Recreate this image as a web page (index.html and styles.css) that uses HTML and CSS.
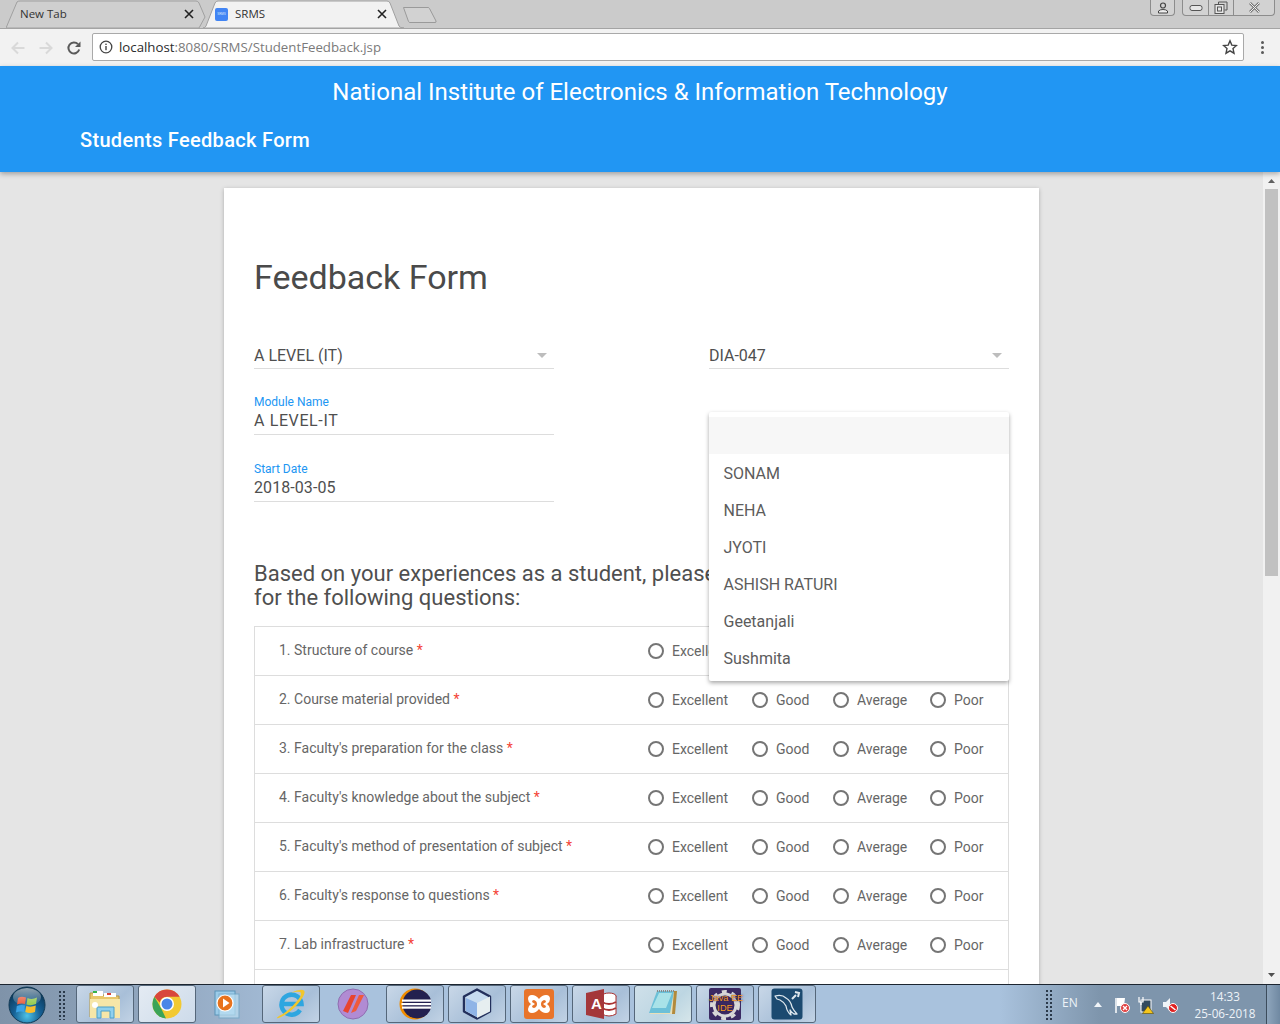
FILE: index.html
```html
<!DOCTYPE html>
<html lang="en">
<head>
<meta charset="utf-8">
<title>SRMS</title>
<link rel="stylesheet" href="styles.css">
</head>
<body>
<div class="screen">
  <header class="browser">
    <div class="tabstrip">
      <div class="tab tab-inactive">
        <svg class="tab-shape" width="200" height="28" viewBox="0 0 200 28"><path d="M0 28 L11 2 Q12 1 14 1 L190 1 Q192 1 193 3 L199 17 L193 28 Z" fill="#cfcfcf" stroke="#a0a0a0"/></svg>
        <span class="tab-title">New Tab</span>
        <svg class="tab-close" width="10" height="10" viewBox="0 0 10 10"><path d="M1 1 L9 9 M9 1 L1 9" stroke="#222" stroke-width="1.6"/></svg>
      </div>
      <div class="tab tab-active">
        <svg class="tab-shape" width="202" height="28" viewBox="0 0 202 28"><path d="M0 28 Q2 28 3 26 L12 3 Q13 1 15 1 L184 1 Q186 1 187 3 L196 26 Q197 28 201 28 Z" fill="#f2f2f2" stroke="#a0a0a0"/></svg>
        <span class="favicon">SRMS</span>
        <span class="tab-title">SRMS</span>
        <svg class="tab-close" width="10" height="10" viewBox="0 0 10 10"><path d="M1 1 L9 9 M9 1 L1 9" stroke="#222" stroke-width="1.6"/></svg>
      </div>
      <svg class="newtab" width="36" height="18" viewBox="0 0 36 18"><path d="M1.5 1.5 L26 1.5 Q27 1.500 27.500 2.500 L34 15 Q34.500 16.500 33 16.500 L8 16.500 Q7 16.500 6.500 15.500 Z" fill="#d2d2d2" stroke="#9a9a9a"/></svg>
      <div class="winctl">
        <div class="wc-group wc-user">
          <svg width="14" height="12" viewBox="0 0 14 12"><circle cx="7" cy="3.500" r="2.500" fill="none" stroke="#444" stroke-width="1.200"/><path d="M2.500 11 L2.500 9 Q4 7.500 7 7.500 Q10 7.500 11.500 9 L11.500 11 Z" fill="#eee" stroke="#444"/></svg>
        </div>
        <div class="wc-group">
          <div class="wc-btn wc-min"><svg width="14" height="8" viewBox="0 0 14 8"><rect x="1" y="1.500" width="12" height="5" rx="2" fill="#e6e6e6" stroke="#555"/></svg></div>
          <div class="wc-btn wc-max"><svg width="14" height="13" viewBox="0 0 14 13"><path d="M4.500 3 V1 H13 V9 H10.500" fill="none" stroke="#555"/><rect x="1" y="3.500" width="9" height="9" fill="#e6e6e6" stroke="#555"/><rect x="3.500" y="6" width="4" height="4" fill="none" stroke="#555"/></svg></div>
          <div class="wc-btn wc-close"><svg width="13" height="11" viewBox="0 0 13 11"><path d="M2 1 L11 10 M11 1 L2 10" stroke="#777" stroke-width="2.600"/><path d="M2 1 L11 10 M11 1 L2 10" stroke="#eee" stroke-width="1"/></svg></div>
        </div>
      </div>
    </div>
    <div class="toolbar">
      <div class="navs">
        <svg width="16" height="16" viewBox="0 0 16 16"><path d="M14.500 8 H2.500 M8 2.500 L2.500 8 L8 13.500" fill="none" stroke="#d9d9d9" stroke-width="2"/></svg>
        <svg width="16" height="16" viewBox="0 0 16 16"><path d="M1.500 8 H13.500 M8 2.500 L13.500 8 L8 13.500" fill="none" stroke="#d9d9d9" stroke-width="2"/></svg>
        <svg width="16" height="16" viewBox="0 0 16 16"><path d="M13.200 9.500 A5.500 5.500 0 1 1 12 4.200" fill="none" stroke="#5a5a5a" stroke-width="2"/><path d="M14.500 1.500 V7 H9 Z" fill="#5a5a5a"/></svg>
      </div>
      <div class="urlbox">
        <svg width="14" height="14" viewBox="0 0 14 14"><circle cx="7" cy="7" r="5.800" fill="none" stroke="#444" stroke-width="1.300"/><rect x="6.300" y="6" width="1.400" height="4.200" fill="#444"/><rect x="6.300" y="3.600" width="1.400" height="1.400" fill="#444"/></svg>
        <span class="url"><span class="url-host">localhost</span>:8080/SRMS/StudentFeedback.jsp</span>
        <svg class="star" width="16" height="16" viewBox="0 0 16 16"><path d="M8 1.800 L9.800 6.100 L14.500 6.500 L11 9.600 L12 14.200 L8 11.800 L4 14.200 L5 9.600 L1.500 6.500 L6.200 6.100 Z" fill="none" stroke="#444" stroke-width="1.400"/></svg>
      </div>
      <div class="kebab"><i></i><i></i><i></i></div>
    </div>
  </header>

  <div class="appbar">
    <h1 class="org">National Institute of Electronics &amp; Information Technology</h1>
    <h2 class="formname">Students Feedback Form</h2>
  </div>

  <div class="viewport">
    <main class="scroller">
      <section class="card">
        <h2 class="card-title">Feedback Form</h2>
        <div class="fields">
          <div class="field select"><span class="value">A LEVEL (IT)</span><i class="caret"></i></div>
          <div class="field select"><span class="value">DIA-047</span><i class="caret"></i></div>
          <div class="field labeled"><label class="flabel">Module Name</label><span class="value value-wide">A LEVEL-IT</span></div>
          <div class="field-blank"></div>
          <div class="field labeled"><label class="flabel">Start Date</label><span class="value">2018-03-05</span></div>
        </div>
        <p class="prompt">Based on your experiences as a student, please select a rating<br>for the following questions:</p>
        <div class="questions">
          <div class="row"><div class="q">1. Structure of course <b>*</b></div><div class="opts"><span class="opt"><i class="radio"></i>Excellent</span><span class="opt"><i class="radio"></i>Good</span><span class="opt"><i class="radio"></i>Average</span><span class="opt"><i class="radio"></i>Poor</span></div></div>
          <div class="row"><div class="q">2. Course material provided <b>*</b></div><div class="opts"><span class="opt"><i class="radio"></i>Excellent</span><span class="opt"><i class="radio"></i>Good</span><span class="opt"><i class="radio"></i>Average</span><span class="opt"><i class="radio"></i>Poor</span></div></div>
          <div class="row"><div class="q">3. Faculty's preparation for the class <b>*</b></div><div class="opts"><span class="opt"><i class="radio"></i>Excellent</span><span class="opt"><i class="radio"></i>Good</span><span class="opt"><i class="radio"></i>Average</span><span class="opt"><i class="radio"></i>Poor</span></div></div>
          <div class="row"><div class="q">4. Faculty's knowledge about the subject <b>*</b></div><div class="opts"><span class="opt"><i class="radio"></i>Excellent</span><span class="opt"><i class="radio"></i>Good</span><span class="opt"><i class="radio"></i>Average</span><span class="opt"><i class="radio"></i>Poor</span></div></div>
          <div class="row"><div class="q">5. Faculty's method of presentation of subject <b>*</b></div><div class="opts"><span class="opt"><i class="radio"></i>Excellent</span><span class="opt"><i class="radio"></i>Good</span><span class="opt"><i class="radio"></i>Average</span><span class="opt"><i class="radio"></i>Poor</span></div></div>
          <div class="row"><div class="q">6. Faculty's response to questions <b>*</b></div><div class="opts"><span class="opt"><i class="radio"></i>Excellent</span><span class="opt"><i class="radio"></i>Good</span><span class="opt"><i class="radio"></i>Average</span><span class="opt"><i class="radio"></i>Poor</span></div></div>
          <div class="row"><div class="q">7. Lab infrastructure <b>*</b></div><div class="opts"><span class="opt"><i class="radio"></i>Excellent</span><span class="opt"><i class="radio"></i>Good</span><span class="opt"><i class="radio"></i>Average</span><span class="opt"><i class="radio"></i>Poor</span></div></div>
          <div class="row"></div>
        </div>
        <ul class="menu">
          <li class="menu-blank"></li>
          <li>SONAM</li>
          <li>NEHA</li>
          <li>JYOTI</li>
          <li>ASHISH RATURI</li>
          <li>Geetanjali</li>
          <li>Sushmita</li>
        </ul>
      </section>
    </main>
    <aside class="scrollbar">
      <svg width="17" height="17" viewBox="0 0 17 17"><path d="M5 11 L8.500 7 L12 11 Z" fill="#606060"/></svg>
      <div class="thumb"></div>
      <div class="track"></div>
      <svg width="17" height="17" viewBox="0 0 17 17"><path d="M5 6 L8.500 10 L12 6 Z" fill="#505050"/></svg>
    </aside>
  </div>

  <footer class="taskbar">
    <svg class="orb" width="38" height="38" viewBox="0 0 38 38">
      <defs>
        <radialGradient id="orbfill" cx=".5" cy=".8" r=".75"><stop offset="0" stop-color="#4ec3e8"/><stop offset=".5" stop-color="#155f94"/><stop offset="1" stop-color="#0b3554"/></radialGradient>
        <linearGradient id="orbshine" x1="0" y1="0" x2="0" y2="1"><stop offset="0" stop-color="#fff" stop-opacity=".55"/><stop offset="1" stop-color="#fff" stop-opacity=".05"/></linearGradient>
      </defs>
      <circle cx="19" cy="19" r="18" fill="url(#orbfill)" stroke="#123a55"/>
      <path d="M10 12 Q13 10 18 11.500 L17 18 Q13 17 9 18.500 Z" fill="#e8522f"/>
      <path d="M19.500 12 Q24 14 29 11.500 L28 18 Q23 20 18.500 18.500 Z" fill="#8cc63f"/>
      <path d="M8.800 20 Q13 18.500 17 19.500 L16 26 Q12 25 8 26.500 Z" fill="#3ba3e6"/>
      <path d="M18.300 20 Q23 21.500 27.800 19.500 L27 26 Q22 28 17.300 26 Z" fill="#f9bc2c"/>
      <ellipse cx="19" cy="11" rx="14" ry="9" fill="url(#orbshine)"/>
    </svg>
    <div class="grip"></div>
    <div class="apps">
      <div class="app"><svg width="36" height="34" viewBox="0 0 36 34"><path d="M3 6 H15 L17 9 H32 V30 H3 Z" fill="#e8c76a" stroke="#b99a44"/><rect x="6" y="4" width="10" height="5" fill="#fff"/><rect x="6" y="4" width="4" height="2" fill="#37b34a"/><rect x="17" y="6" width="12" height="4" fill="#fff"/><rect x="20" y="6" width="4" height="2" fill="#d8433a"/><path d="M3 12 H33 V31 H3 Z" fill="#f6e6a8"/><path d="M10 31 V20 H27 V31 H23 V24 H14 V31 Z" fill="#8fd0ee" stroke="#4b9fca"/><circle cx="8" cy="18" r="3" fill="#fff"/></svg></div>
      <div class="app app-light"><svg width="30" height="30" viewBox="0 0 30 30"><circle cx="15" cy="15" r="14.500" fill="#f2c931"/><path d="M2.400 7.800 A14.500 14.500 0 0 1 27.600 7.800 L15 7.800 Q9 8 7.700 13.500 Z" fill="#d8473b"/><path d="M2.400 7.800 L9 19 L14 29.500 A14.500 14.500 0 0 1 2.400 7.800" fill="#3ba458"/><circle cx="15" cy="15" r="7" fill="#fff"/><circle cx="15" cy="15" r="5.500" fill="#4a86e8"/></svg></div>
      <div class="app app-bare"><svg width="32" height="30" viewBox="0 0 32 30"><rect x="2" y="2" width="20" height="24" fill="#9ccbe8" stroke="#5a94b8"/><rect x="6" y="5" width="20" height="24" fill="#bde0f2" stroke="#6ca5c6" opacity=".7"/><circle cx="12" cy="14" r="8" fill="#e8731c" stroke="#fff" stroke-width="1.200"/><path d="M10 9.500 L16.500 14 L10 18.500 Z" fill="#fff"/></svg></div>
      <div class="app"><svg width="34" height="32" viewBox="0 0 34 32"><path d="M26 22 A10 10 0 1 1 27.500 16 H8" fill="none" stroke="#2ea6e0" stroke-width="4.500"/><path d="M5 28 Q0 32 7 29 Q18 24 27 12 Q33 3 29 2 Q25 1 17 5 Q23 3 26 4 Q29 6 23 13 Q14 24 5 28 Z" fill="#f2c62c"/></svg></div>
      <div class="app app-bare"><svg width="32" height="32" viewBox="0 0 32 32"><circle cx="16" cy="16" r="15" fill="#b18bd3" stroke="#8f6db0"/><path d="M6 23 L14 7 H19 L11 25 Z" fill="#e8442f"/><path d="M14 25 L22 7 H27 L19 23 Z" fill="#ef5a3c"/></svg></div>
      <div class="app"><svg width="32" height="32" viewBox="0 0 32 32"><circle cx="16" cy="16" r="15.500" fill="#f08c00"/><circle cx="18" cy="16" r="14.500" fill="#23204f"/><rect x="3" y="11.500" width="29" height="2.200" fill="#fff"/><rect x="2.500" y="15" width="29.500" height="2.200" fill="#fff"/><rect x="3" y="18.500" width="29" height="2.200" fill="#fff"/></svg></div>
      <div class="app"><svg width="32" height="32" viewBox="0 0 32 32"><path d="M16 1.500 L29 8.500 V23.500 L16 30.500 L3 23.500 V8.500 Z" fill="#c7dcf0" stroke="#23305c" stroke-width="2.400" stroke-linejoin="round"/><path d="M16 15 L29 8.500 V23.500 L16 30 Z" fill="#e6eef0"/><path d="M5 10 L16 15 V29 L5 23 Z" fill="#8fb4e6"/></svg></div>
      <div class="app"><svg width="32" height="32" viewBox="0 0 32 32"><rect x="1" y="1" width="30" height="30" rx="3" fill="#e8742a"/><path d="M9 7 Q5 7 5 11 Q5 14 8 16 Q5 18 5 21 Q5 25 9 25 Q13 25 16 21 Q19 25 23 25 Q27 25 27 21 Q27 18 24 16 Q27 14 27 11 Q27 7 23 7 Q19 7 16 11 Q13 7 9 7 Z M11 12 Q14 13 14 16 Q14 19 11 20 Q9 20 9 18 L12 16 L9 14 Q9 12 11 12 Z M21 12 Q23 12 23 14 L20 16 L23 18 Q23 20 21 20 Q18 19 18 16 Q18 13 21 12 Z" fill="#fff" fill-rule="evenodd"/></svg></div>
      <div class="app"><svg width="32" height="32" viewBox="0 0 32 32"><ellipse cx="24" cy="8" rx="7" ry="3" fill="#fff" stroke="#a33"/><path d="M17 8 V26 Q24 30 31 26 V8" fill="#fff" stroke="#a33"/><path d="M17 14 Q24 18 31 14 M17 20 Q24 24 31 20" fill="none" stroke="#a33" stroke-width="2"/><path d="M1 5 L19 1 V31 L1 27 Z" fill="#a4373a"/><text class="app-letter" x="6" y="21">A</text></svg></div>
      <div class="app app-tint"><svg width="34" height="32" viewBox="0 0 34 32"><path d="M11 3 H30 L28 26 H4 Z" fill="#e8dfb8"/><path d="M11 3 H28 L24 25 H3 Z" fill="#6cc0d8"/><path d="M13 5 H26 L20 20 H6 Z" fill="#a9e2e8"/><path d="M28 3 H31 L29 26 H26 Z" fill="#b28a3c"/><path d="M11 3 H29" stroke="#888" stroke-dasharray="1 1" stroke-width="2"/></svg></div>
      <div class="app"><div class="javaee"><svg class="gear" width="32" height="32" viewBox="0 0 32 32"><rect width="32" height="32" rx="2" fill="#3b2a63"/><circle cx="16" cy="17" r="11" fill="none" stroke="#d8d8d8" stroke-width="3"/><circle cx="16" cy="17" r="13.500" fill="none" stroke="#d8d8d8" stroke-width="3" stroke-dasharray="5 5"/></svg><span class="javaee-text">Java EE<br>IDE</span></div></div>
      <div class="app"><svg width="32" height="32" viewBox="0 0 32 32"><rect x=".500" y=".500" width="31" height="31" rx="3" fill="#1c4a70"/><path d="M4 8 Q11 6 15 10 Q20 13 21 19 Q23 23 26 26 L23 26 Q20 24 19 22 L20 27 Q16 24 15 18 Q13 14 9 12 L6 11 Z" fill="none" stroke="#dfe8ee" stroke-width="1.300" stroke-linejoin="round"/><path d="M21 11 L25 7 M24 4 L28 5 L27 9" fill="none" stroke="#dfe8ee" stroke-width="2"/></svg></div>
    </div>
    <div class="tray">
      <div class="grip"></div>
      <span class="lang">EN</span>
      <svg class="tray-up" width="8" height="5" viewBox="0 0 8 5"><path d="M0 5 L4 0 L8 5 Z" fill="#f0f4f8"/></svg>
      <div class="tray-icons">
        <svg width="16" height="18" viewBox="0 0 16 18"><path d="M2 2 V17" stroke="#fff" stroke-width="1.500"/><path d="M3 2 H11 L10 10 H3 Z" fill="#fff"/><circle cx="11" cy="12" r="4.500" fill="#e04040" stroke="#fff"/><path d="M9 10 L13 14 M13 10 L9 14" stroke="#fff" stroke-width="1.300"/></svg>
        <svg width="16" height="18" viewBox="0 0 16 18"><rect x="3" y="4" width="10" height="12" fill="#324a5e" stroke="#fff"/><path d="M1 1 V6 H5 V1 M3 6 V9" fill="none" stroke="#fff" stroke-width="1.200"/><path d="M10 10 L15.500 17.500 H4.500 Z" fill="#f5c61c" stroke="#5a4a00" stroke-width=".6"/></svg>
        <svg width="16" height="18" viewBox="0 0 16 18"><path d="M1 6 H4 L8 2 V15 L4 11 H1 Z" fill="#f0f4f8"/><circle cx="11" cy="12" r="4.500" fill="#e02020" stroke="#fff"/><path d="M8.500 10 L13.500 14" stroke="#fff" stroke-width="1.500"/></svg>
      </div>
      <div class="clock"><span>14:33</span><span>25-06-2018</span></div>
      <div class="showdesk"></div>
    </div>
  </footer>
</div>
</body>
</html>
```

FILE: styles.css
```css
* { box-sizing: border-box; }
html, body { margin: 0; padding: 0; height: 100%; overflow: hidden; }
body { font-family: Roboto, "Liberation Sans", sans-serif; background: #e5e5e5; }
h1, h2, p, ul { margin: 0; padding: 0; font-weight: 400; }

.screen { width: 1280px; height: 1024px; display: flex; flex-direction: column; overflow: hidden; }

/* Browser chrome */
.browser { height: 66px; flex: none; display: flex; flex-direction: column; }
.tabstrip { height: 29px; flex: none; background: #cbcbcb; border-bottom: 1px solid #a4a4a4; display: flex; padding-left: 6px; position: relative; }
.tab { position: relative; height: 28px; display: flex; align-items: center; font: 11.500px/26px "Open Sans", "Noto Sans", sans-serif; color: #333; }
.tab-shape { position: absolute; left: 0; top: 0; }
.tab-title, .favicon, .tab-close { position: relative; }
.tab-inactive { width: 197px; padding-left: 14px; }
.tab-inactive .tab-title { flex: 1; }
.tab-inactive .tab-close { margin-right: 9px; }
.tab-active { width: 199px; padding-left: 12px; z-index: 1; }
.tab-active .tab-title { flex: 1; margin-left: 7px; }
.tab-active .tab-close { margin-right: 15px; }
.favicon { width: 13px; height: 13px; border-radius: 2px; background: #4285f4; color: #dfe9fb; font: 3px/13px "Liberation Sans", sans-serif; text-align: center; overflow: hidden; }
.newtab { margin: 6px 0 0 0; }
.winctl { margin-left: auto; display: flex; gap: 7px; align-items: flex-start; padding-right: 5px; height: 17px; }
.wc-group { display: flex; height: 16px; background: #d2d2d2; border: 1px solid #8c8c8c; border-top: 0; border-radius: 0 0 4px 4px; }
.wc-user { width: 25px; justify-content: center; align-items: center; }
.wc-btn { display: flex; justify-content: center; align-items: center; border-left: 1px solid #8c8c8c; }
.wc-btn:first-child { border-left: 0; }
.wc-min { width: 25px; }
.wc-max { width: 25px; }
.wc-close { width: 41px; }

.toolbar { height: 37px; flex: none; background: #f2f2f2; display: flex; align-items: center; }
.navs { width: 92px; display: flex; gap: 12px; padding-left: 10px; flex: none; }
.urlbox { width: 1152px; height: 28px; flex: none; background: #fff; border: 1px solid #a9a9a9; border-radius: 2px; display: flex; align-items: center; padding: 0 5px 0 6px; margin-top: -1px; }
.url { flex: 1; margin-left: 6px; font: 13.250px "Open Sans", "Noto Sans", sans-serif; color: #7a7a7a; white-space: nowrap; }
.url-host { color: #2b2b2b; }
.kebab { width: 36px; display: flex; flex-direction: column; align-items: center; gap: 2px; }
.kebab i { width: 3px; height: 3px; background: #5a5a5a; border-radius: 50%; }

/* App bar */
.appbar { height: 106px; flex: none; background: #2196f3; color: #fff; padding-top: 10px; box-shadow: 0 2px 5px rgba(0,0,0,.3); position: relative; z-index: 2; }
.org { font-size: 24px; line-height: 32px; text-align: center; }
.formname { font-size: 20px; line-height: 28px; font-weight: 500; margin: 18px 0 0 80px; letter-spacing: .32px; }

/* Page */
.viewport { flex: 1; min-height: 0; display: flex; overflow: hidden; }
.scroller { flex: 1; min-width: 0; overflow: hidden; padding-top: 16px; background: #e5e5e5; }
.card { position: relative; width: 815px; margin: 0 auto; background: #fff; padding: 71px 30px 0; box-shadow: 0 1px 4px rgba(0,0,0,.25); }
.card-title { font-size: 34px; line-height: 36px; color: #4a4a4a; }

.fields { display: grid; grid-template-columns: 300px 300px; column-gap: 155px; margin-top: 42px; }
.field { width: 300px; border-bottom: 1px solid #ddd; color: #4f4f4f; font-size: 16px; line-height: 20px; }
.select { height: 32px; padding-top: 9px; position: relative; margin-bottom: 25px; }
.caret { position: absolute; right: 7px; top: 16px; border: 5px solid transparent; border-top: 5px solid #bdbdbd; border-bottom: 0; }
.labeled { height: 41px; margin-bottom: 26px; display: flex; flex-direction: column; }
.flabel { font-size: 12px; line-height: 14px; color: #2196f3; margin-top: 1px; }
.value { display: block; }
.labeled .value { line-height: 20px; margin-top: 2px; letter-spacing: .08px; }
.labeled .value-wide { letter-spacing: .62px; }

.prompt { font-size: 22px; line-height: 24px; color: #4f4f4f; margin-top: 34px; }

.questions { margin-top: 16px; width: 755px; border: 1px solid #ddd; border-bottom: 0; }
.row { height: 49px; border-bottom: 1px solid #ddd; display: flex; align-items: center; font-size: 14px; color: #666; }
.q { width: 393px; flex: none; padding: 0 0 2px 24px; white-space: nowrap; }
.q b { font-weight: 400; color: #f44336; }
.opts { display: grid; grid-template-columns: 104px 81px 97px auto; }
.opt { display: flex; align-items: center; gap: 8px; }
.radio { width: 16px; height: 16px; border: 2px solid #757575; border-radius: 50%; flex: none; }

.menu { position: absolute; left: 485px; top: 224px; width: 300px; height: 269px; background: #fff; list-style: none; padding-top: 5px; border-radius: 2px; box-shadow: 0 2px 4px rgba(0,0,0,.35); font-size: 16px; color: #5c5c5c; }
.menu li { height: 37px; line-height: 39px; padding-left: 14.500px; }
.menu .menu-blank { background: #f7f7f7; }

.scrollbar { width: 17px; flex: none; background: #f1f1f1; display: flex; flex-direction: column; }
.thumb { height: 387px; margin: 0 2px; background: #c1c1c1; }
.track { flex: 1; }

/* Windows taskbar */
.taskbar { height: 40px; flex: none; display: flex; align-items: stretch; border-top: 1px solid #1c2530; background: linear-gradient(90deg, #7f93a9 0, #96acc5 190px, #a9c2dd 320px, #a9c2dd 1000px, #7e95ac 1100px, #7e95ac 100%); }
.orb { margin: 1px 0 0 8px; flex: none; }
.grip { width: 8px; margin: 5px 0 4px 12px; flex: none; background-image: radial-gradient(circle, #2b3a4a 0 1px, transparent 1.200px); background-size: 4px 4px; }
.apps { display: flex; gap: 4px; margin-left: 10px; }
.app { width: 58px; height: 38px; flex: none; display: flex; justify-content: center; align-items: center; border: 1px solid #55677a; border-radius: 3px; background: linear-gradient(135deg, #c9d8e8, #a8bfd8 60%, #c2d3e5); }
.app-light { background: linear-gradient(135deg, #e4ebf3, #cddbea); }
.app-tint { background: linear-gradient(135deg, #cfe0ea, #bdd6e2 60%, #d6e6ea); }
.app-bare { background: none; border-color: transparent; }
.app-letter { font: 700 15px "Liberation Sans", sans-serif; fill: #fff; }
.javaee { position: relative; width: 32px; height: 32px; }
.gear { display: block; }
.javaee-text { position: absolute; left: 0; right: 0; top: 5px; font: 9.200px/10px "Liberation Sans", sans-serif; color: #f59a24; text-shadow: 0 0 2px #2a1a40; text-align: center; white-space: nowrap; }
.tray { margin-left: auto; display: flex; align-items: center; height: 100%; }
.tray .grip { margin: 4px 0 4px 0; height: 31px; }
.lang { width: 21px; margin-left: 9px; font: 12px "Open Sans", "Noto Sans", sans-serif; color: #eef3f8; margin-top: -4px; }
.tray-up { margin-left: 11px; }
.tray-icons { display: flex; gap: 8px; margin-left: 12px; }
.clock { width: 84px; margin-left: 5px; margin-right: -1px; display: flex; flex-direction: column; align-items: center; font: 11.700px/17px "Open Sans", "Noto Sans", sans-serif; color: #eef3f8; }
.showdesk { width: 14px; height: 100%; background: linear-gradient(90deg, #8ea5bc, #7089a2); border-left: 1px solid #3c4c5c; }
```
